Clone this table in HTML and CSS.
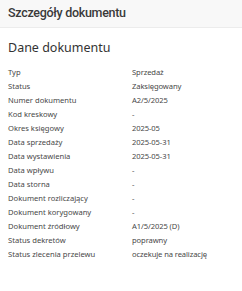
FILE: index.html
```html
<!DOCTYPE html>
<html lang="pl">
<head>
<meta charset="utf-8">
<link rel="stylesheet" href="styles.css">
</head>
<body>
<header class="panel-head">Szczegóły dokumentu</header>
<section class="panel-body">
  <h2 class="section-title">Dane dokumentu</h2>
  <dl class="details">
    <dt>Typ</dt><dd>Sprzedaż</dd>
    <dt>Status</dt><dd>Zaksięgowany</dd>
    <dt>Numer dokumentu</dt><dd>A2/5/2025</dd>
    <dt>Kod kreskowy</dt><dd>-</dd>
    <dt>Okres księgowy</dt><dd>2025-05</dd>
    <dt>Data sprzedaży</dt><dd>2025-05-31</dd>
    <dt>Data wystawienia</dt><dd>2025-05-31</dd>
    <dt>Data wpływu</dt><dd>-</dd>
    <dt>Data storna</dt><dd>-</dd>
    <dt>Dokument rozliczający</dt><dd>-</dd>
    <dt>Dokument korygowany</dt><dd>-</dd>
    <dt>Dokument źródłowy</dt><dd>A1/5/2025 (D)</dd>
    <dt>Status dekretów</dt><dd>poprawny</dd>
    <dt>Status zlecenia przelewu</dt><dd>oczekuje na realizację</dd>
  </dl>
</section>
</body>
</html>
```
FILE: styles.css
```css
html, body {
  margin: 0;
  padding: 0;
  background: #ffffff;
  font-family: "Noto Sans", "Open Sans", sans-serif;
  color: #333333;
}

.panel-head {
  height: 28px;
  box-sizing: border-box;
  padding: 4px 8px 0;
  background: #f8f8f8;
  border-bottom: 1px solid #ececec;
  font-family: Roboto, "Noto Sans", sans-serif;
  font-size: 12.5px;
  font-weight: 500;
  letter-spacing: -0.3px;
  line-height: 17px;
  color: #3a3a3a;
}

.panel-body {
  padding: 11px 8px 0;
}

.section-title {
  margin: 0 0 8px;
  font-size: 12.5px;
  font-weight: 400;
  line-height: 18px;
  color: #333333;
}

.details {
  margin: 0;
  display: grid;
  grid-template-columns: 124px 1fr;
  font-size: 7.6px;
  line-height: 14px;
  color: #484848;
}

.details dt,
.details dd {
  margin: 0;
}

.details dd {
  letter-spacing: -0.1px;
}
```
